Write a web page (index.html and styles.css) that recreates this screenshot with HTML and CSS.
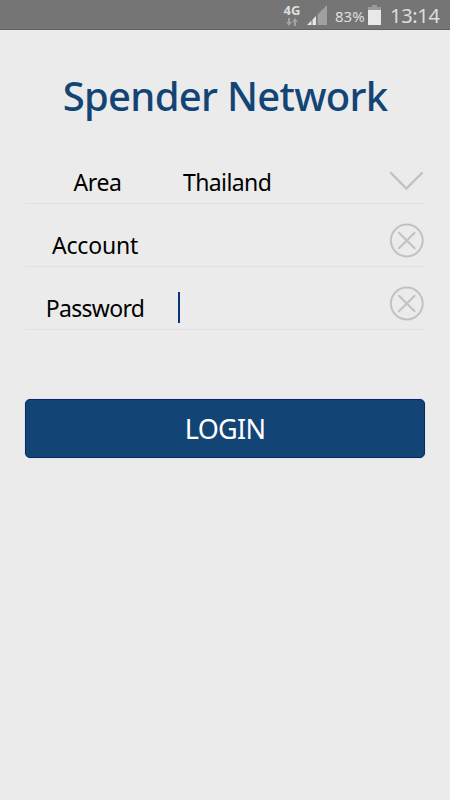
FILE: index.html
```html
<!DOCTYPE html>
<html lang="en">
<head>
    <meta charset="utf-8">
    <meta name="viewport" content="width=device-width, initial-scale=1">
    <title>Spender Network</title>
    <link rel="stylesheet" href="styles.css">
</head>
<body>
    <div class="statusbar">
        <div class="network">
            <span class="network-type">4G</span>
            <svg class="arrows" width="12" height="8" viewBox="0 0 12 8">
                <path d="M2 0h2v4h2L3 8 0 4h2zM8 8h2V4h2L9 0 6 4h2z" fill="#a3a3a3"/>
            </svg>
        </div>
        <svg class="signal" width="20" height="20" viewBox="0 0 20 20">
            <path d="M0 20L4.500 15.500V20zM5.500 20V14.500L9 11V20z" fill="#e8e8e8"/>
            <path d="M10.500 20V9.500L20 0V20z" fill="#a0a0a0"/>
        </svg>
        <span class="percent">83%</span>
        <svg class="battery" width="13" height="20" viewBox="0 0 13 20">
            <path d="M4 0h5v2h4v4H0V2h4z" fill="#9b9b9b"/>
            <path d="M0 5h13v15H0z" fill="#e8e8e8"/>
        </svg>
        <span class="clock">13:14</span>
    </div>

    <div class="login">
        <h1 class="title">Spender Network</h1>

        <div class="row">
            <span class="label label-area">Area</span>
            <span class="value">Thailand</span>
            <svg class="icon" width="36" height="36" viewBox="0 0 36 36">
                <path d="M2 13L17.400 28.500L33 13" class="line chevron"/>
            </svg>
        </div>
        <div class="row">
            <span class="label label-account">Account</span>
            <span class="value"></span>
            <svg class="icon" width="36" height="36" viewBox="0 0 36 36">
                <circle cx="17.800" cy="17.500" r="15.900" class="line"/>
                <path d="M10 9.700L25.600 25.300M25.600 9.700L10 25.300" class="line"/>
            </svg>
        </div>
        <div class="row">
            <span class="label label-password">Password</span>
            <span class="value"><i class="caret"></i></span>
            <svg class="icon" width="36" height="36" viewBox="0 0 36 36">
                <circle cx="17.800" cy="17.500" r="15.900" class="line"/>
                <path d="M10 9.700L25.600 25.300M25.600 9.700L10 25.300" class="line"/>
            </svg>
        </div>

        <button class="btn-login">LOGIN</button>
    </div>
</body>
</html>
```
FILE: styles.css
```css
* {
    box-sizing: border-box;
}
body {
    margin: 0;
    min-height: 800px;
    background: #ebebeb;
    color: #000;
    font-family: "Noto Sans", sans-serif;
}
.statusbar {
    display: flex;
    height: 30px;
    padding-right: 10px;
    justify-content: flex-end;
    background: #757575;
    border-bottom: 1px solid #626262;
    color: #dedede;
}
.network {
    display: flex;
    flex-direction: column;
    align-items: center;
    width: 18px;
    padding-top: 4px;
    margin-right: 6px;
}
.network-type {
    font-size: 13px;
    font-weight: 700;
    line-height: 12px;
}
.arrows {
    margin-top: 2px;
}
.signal {
    margin: 5px 8px 0 0;
}
.percent {
    width: 30px;
    margin-right: 3px;
    font-size: 15px;
    line-height: 32px;
    white-space: nowrap;
}
.battery {
    margin: 5px 9px 0 0;
}
.clock {
    width: 50px;
    font-size: 20px;
    letter-spacing: -0.300px;
    line-height: 32px;
    white-space: nowrap;
}
.login {
    padding: 0 25px;
}
.title {
    height: 111px;
    margin: 0;
    padding-top: 36px;
    color: #124575;
    font-size: 40px;
    font-weight: 500;
    letter-spacing: -0.700px;
    line-height: 60px;
    text-align: center;
    white-space: nowrap;
}
.row {
    display: flex;
    align-items: flex-end;
    height: 63px;
    border-bottom: 1px solid #e0e0e0;
}
.label {
    width: 145px;
    padding-bottom: 5px;
    font-size: 23px;
    line-height: 32px;
    text-align: center;
}
.label-area {
    letter-spacing: -0.400px;
}
.label-account {
    padding-right: 5px;
    letter-spacing: -0.200px;
}
.label-password {
    padding-right: 5px;
    letter-spacing: -0.700px;
}
.value {
    flex: 1;
    padding: 0 0 5px 13px;
    font-size: 23px;
    letter-spacing: -0.600px;
    line-height: 32px;
}
.caret {
    display: block;
    width: 2px;
    height: 31px;
    margin: 0 0 1px -5px;
    background: #0b3474;
}
.icon {
    margin-bottom: 7px;
}
.line {
    fill: none;
    stroke: #c2c2c2;
    stroke-width: 2;
    stroke-linecap: round;
}
.chevron {
    stroke-width: 2.400;
}
.btn-login {
    display: block;
    width: 100%;
    height: 59px;
    margin-top: 69px;
    padding: 1px 0 0;
    border: 1px solid #062a66;
    border-radius: 5px;
    background: #124575;
    box-shadow: 0 0 1px #8a9ab0;
    color: #fff;
    font-family: inherit;
    font-size: 27px;
    letter-spacing: -0.700px;
    line-height: 56px;
}
```
